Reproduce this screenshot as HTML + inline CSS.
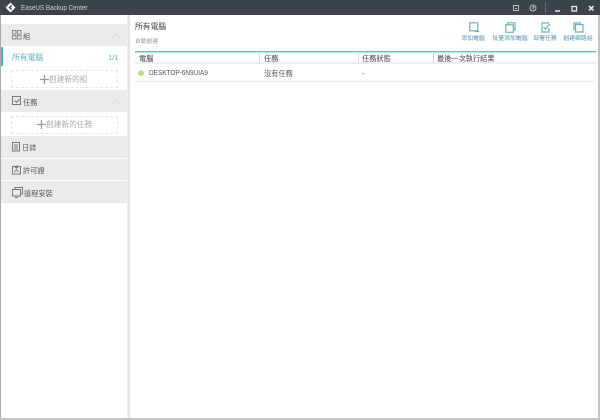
<!DOCTYPE html>
<html><head><meta charset="utf-8">
<style>
html,body{margin:0;padding:0;background:#fff}
#a{position:relative;width:600px;height:420px;overflow:hidden;background:#fff;font-family:"Liberation Sans","Noto Sans CJK TC",sans-serif;color:#555}
#a div,#a svg{position:absolute}
.t{white-space:nowrap;line-height:12px}
.h{left:1px;width:126px;background:#ebebeb}
.d{left:11px;width:105px;height:16px;border:1px dashed #e6e6e6}
.dt{color:#aaa;font-size:7.700px}
.l{font-size:7.200px;color:#555}
.b{font-size:5.900px;color:#4d94b8;text-align:center;width:50px}
.s{fill:none;stroke:#777;stroke-width:1}
.g{fill:none;stroke:#5fb8bc;stroke-width:1.2}
</style></head><body>
<div id="a">
<div style="left:0;top:0;width:600px;height:15px;background:#3c434d"></div>
<svg style="left:5px;top:2px" width="11" height="11" viewBox="0 0 11 11"><path d="M5.500 0.500L10.500 5.500L5.500 10.500L0.500 5.500Z" fill="#fff"/><path d="M6.500 3.500L4.500 5.500L6.500 7.500" fill="none" stroke="#3c434d" stroke-width="1.500"/></svg>
<div class="t" style="left:21px;top:2px;font-size:7.500px;color:#ccd0d4;transform:scaleX(.84);transform-origin:left">EaseUS Backup Center</div>
<svg style="left:510px;top:2px" width="90" height="13" viewBox="0 0 90 13"><g fill="none" stroke="#b8bcc0"><rect x="3.500" y="3.500" width="5" height="5"/><path d="M5 6.500H7"/><circle cx="23" cy="6" r="3"/><path d="M22 5.200Q23 4 24 5.200L23 6.500V7.200"/></g><path d="M35.500 0V13" stroke="#626870"/><path d="M45 9H50" stroke="#e8e8e8" stroke-width="1.500"/><rect x="62" y="4.500" width="4.500" height="4.500" fill="none" stroke="#e8e8e8" stroke-width="1.300"/><path d="M79 4L83.500 8.500M83.500 4L79 8.500" stroke="#f0f0f0" stroke-width="1.500"/></svg>

<div style="left:0;top:15px;width:1px;height:405px;background:#aaa"></div>
<div style="left:127px;top:15px;width:3px;height:403px;background:#e4e4e4;border-left:1px solid #efefef;box-sizing:border-box"></div>
<div style="left:598px;top:15px;width:2px;height:405px;background:#c4c4c4"></div>
<div style="left:0;top:418px;width:600px;height:2px;background:#c4c4c4"></div>

<div class="h" style="top:24px;height:22px"></div>
<svg style="left:12px;top:30px" width="10" height="10" viewBox="0 0 10 10"><g class="s" style="stroke:#888"><rect x=".5" y=".5" width="3.500" height="3.500"/><rect x="5.500" y=".5" width="3.500" height="3.500"/><rect x=".5" y="5.500" width="3.500" height="3.500"/><rect x="5.500" y="5.500" width="3.500" height="3.500"/></g></svg>
<div class="t l" style="left:23px;top:31px">組</div>
<svg style="left:111px;top:33px" width="10" height="6" viewBox="0 0 10 6"><path d="M1 5L5 1L9 5" fill="none" stroke="#dcdcdc"/></svg>
<div style="left:1px;top:47px;width:2px;height:19px;background:#4fb5bb"></div>
<div class="t" style="left:12px;top:52px;font-size:7.800px;color:#58b4ba">所有電腦</div>
<div class="t" style="left:108px;top:52px;font-size:7.500px;color:#58b4ba">1/1</div>
<div class="d" style="top:70px"></div>
<svg style="left:40px;top:75px" width="9" height="9" viewBox="0 0 9 9"><path d="M0 4.500H9M4.500 0V9" stroke="#999" stroke-width="1.300"/></svg>
<div class="t dt" style="left:49px;top:74px">創建新的組</div>

<div class="h" style="top:90px;height:22px"></div>
<svg style="left:12px;top:96px" width="10" height="10" viewBox="0 0 10 10"><rect class="s" x=".5" y=".5" width="8" height="8"/><path class="s" d="M2.500 4.500L4.500 6.500L7.500 3"/></svg>
<div class="t l" style="left:23px;top:97px">任務</div>
<svg style="left:111px;top:99px" width="10" height="6" viewBox="0 0 10 6"><path d="M1 5L5 1L9 5" fill="none" stroke="#dcdcdc"/></svg>
<div class="d" style="top:116px"></div>
<svg style="left:37px;top:120px" width="9" height="9" viewBox="0 0 9 9"><path d="M0 4.500H9M4.500 0V9" stroke="#999" stroke-width="1.300"/></svg>
<div class="t dt" style="left:46px;top:119px">創建新的任務</div>

<div class="h" style="top:136px;height:22px"></div>
<svg style="left:12px;top:142px" width="9" height="10" viewBox="0 0 9 10"><rect class="s" x=".5" y=".5" width="7" height="8.500"/><path class="s" d="M2 3H6M2 5H6M2 7H6"/></svg>
<div class="t l" style="left:22px;top:142px">日誌</div>
<div class="h" style="top:159px;height:21px"></div>
<svg style="left:12px;top:164px" width="10" height="11" viewBox="0 0 10 11"><rect class="s" x=".5" y="2.500" width="8" height="7.500"/><circle cx="4.500" cy="3" r="1.500" fill="#777"/><path class="s" d="M2.500 8L4.500 5.500L6.500 8"/></svg>
<div class="t l" style="left:23px;top:165px">許可證</div>
<div class="h" style="top:181px;height:22px"></div>
<svg style="left:12px;top:187px" width="11" height="11" viewBox="0 0 11 11"><path class="s" d="M3 2.500V.5H10.500V7H8.500"/><rect class="s" x=".5" y="2.500" width="8" height="6.500"/><path class="s" d="M3 10.500H6"/></svg>
<div class="t l" style="left:24px;top:188px">遠程安裝</div>

<div class="t" style="left:135px;top:21px;font-size:7.800px;color:#444">所有電腦</div>
<div class="t" style="left:135px;top:36px;font-size:5.800px;color:#999">自動創建</div>

<svg style="left:468px;top:22px" width="11" height="11" viewBox="0 0 11 11"><rect class="g" x="1.800" y=".8" width="8" height="8"/><path class="g" d="M7 9.500H11"/></svg>
<div class="t b" style="left:448px;top:33px">添加電腦</div>
<svg style="left:504px;top:22px" width="12" height="11" viewBox="0 0 12 11"><rect class="g" x="1.800" y="2.800" width="7.500" height="7.500"/><path class="g" d="M3.500 2.500V.8H11V8H9"/></svg>
<div class="t b" style="left:485px;top:33px">批量添加電腦</div>
<svg style="left:540px;top:22px" width="11" height="11" viewBox="0 0 11 11"><path class="g" d="M9 1H2V10H9V6"/><path class="g" d="M3.500 5L5.500 7L10 2"/></svg>
<div class="t b" style="left:520px;top:33px">部署任務</div>
<svg style="left:573px;top:22px" width="11" height="11" viewBox="0 0 11 11"><rect class="g" x="2.500" y="2.500" width="7.500" height="7.500"/><path class="g" d="M1 8V1H8"/></svg>
<div class="t b" style="left:553px;top:33px">創建網路組</div>

<div style="left:135px;top:51px;width:461px;height:1px;background:#5cb9bd"></div>
<div style="left:135px;top:52px;width:461px;height:1px;background:#c8e7e8"></div>
<div style="left:135px;top:62px;width:461px;height:2px;background:#eeeeee"></div>
<div style="left:259px;top:53px;width:1px;height:10px;background:#ddd"></div>
<div style="left:358px;top:53px;width:1px;height:10px;background:#ddd"></div>
<div style="left:433px;top:53px;width:1px;height:10px;background:#ddd"></div>
<div class="t l" style="left:139px;top:53px;color:#444">電腦</div>
<div class="t l" style="left:264px;top:53px;color:#444">任務</div>
<div class="t l" style="left:362px;top:53px;color:#444">任務狀態</div>
<div class="t l" style="left:437px;top:53px;color:#444">最後一次執行結果</div>

<div style="left:138px;top:70px;width:6px;height:6px;border-radius:50%;background:#b5e37c"></div>
<div class="t" style="left:149px;top:68px;font-size:7px;color:#555;transform:scaleX(.92);transform-origin:left">DESKTOP-6N9UIA9</div>
<div class="t l" style="left:264px;top:68px">沒有任務</div>
<div class="t l" style="left:362px;top:68px">-</div>
<div style="left:135px;top:81px;width:461px;height:1px;background:#ececec"></div>
</div>
</body></html>
